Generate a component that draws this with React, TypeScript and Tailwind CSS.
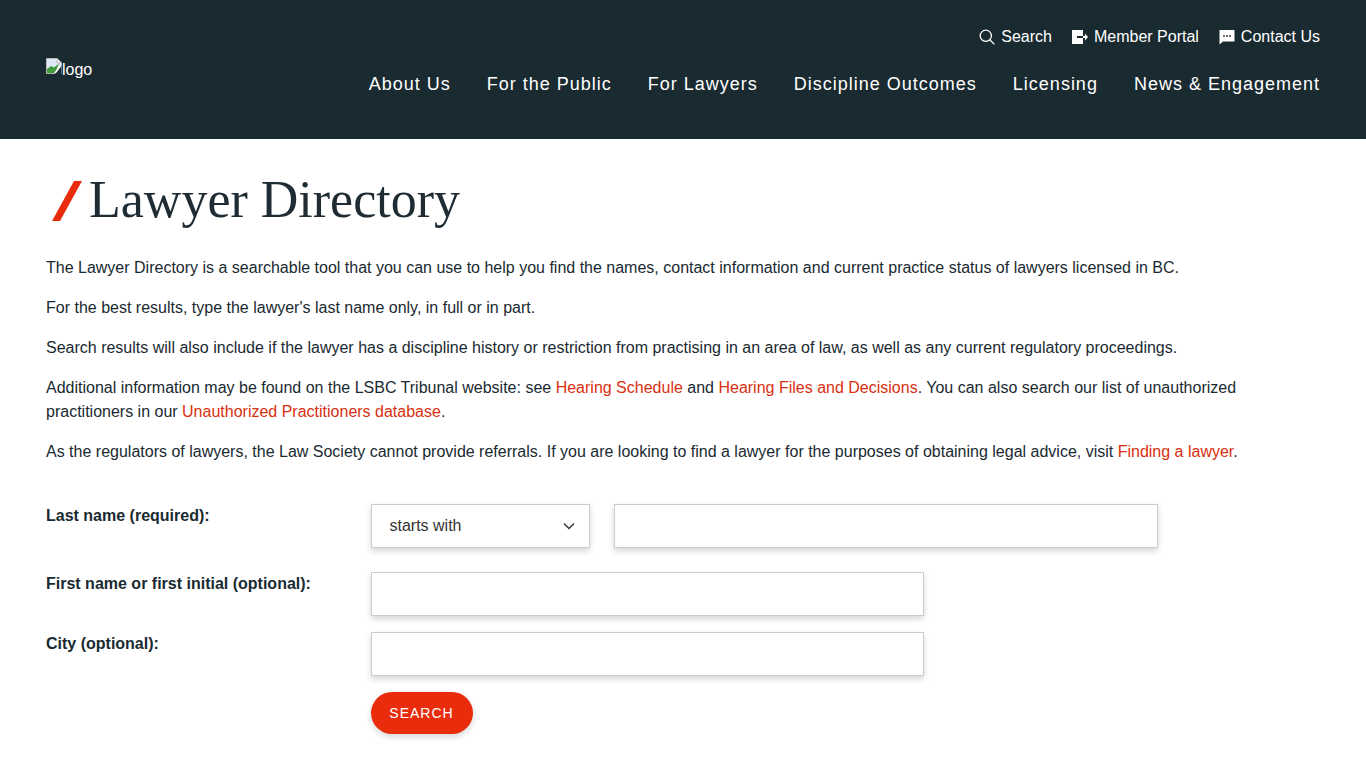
import React from "react";

const navItems = ["About Us", "For the Public", "For Lawyers", "Discipline Outcomes", "Licensing", "News & Engagement"];

const BrokenImage = () => (
  <svg width="16" height="16" viewBox="0 0 16 16" className="shrink-0 -mt-px">
    <path d="M0.5 0.5H11L15.5 5V15.5H0.5Z" fill="#dfe8f6" stroke="#b8b8b8" />
    <path d="M11 0.5V5H15.5" fill="#fff" stroke="#b8b8b8" />
    <path d="M1 15V11L5 8L8 9.5L13 5.5L9 15Z" fill="#3f9a3a" />
    <path d="M9 16L15.5 7.5V16Z" fill="#1a2a31" />
    <path d="M8 15L14 7.5L15 8.5L10 15Z" fill="#fff" />
  </svg>
);

const Header = () => (
  <header className="h-[139px] bg-[#1a2a31] px-[46px] flex justify-between text-white">
    <div className="flex items-start pt-[59px] text-base leading-[22px]">
      <BrokenImage />
      <span>logo</span>
    </div>
    <div className="flex flex-col items-end pt-[26px]">
      <div className="flex items-center gap-5 text-base leading-[22px]">
        <a className="flex items-center gap-[6px]">
          <svg width="16" height="16" viewBox="0 0 16 16" fill="none" stroke="#fff" strokeWidth="1.3">
            <circle cx="6.8" cy="6.8" r="5.6" />
            <path d="M10.8 10.8L15.4 15.4" />
          </svg>
          Search
        </a>
        <a className="flex items-center gap-[6px]">
          <svg width="16" height="16" viewBox="0 0 16 16">
            <path d="M0 1H11V15H0Z" fill="#fff" />
            <path d="M5 7H11V9H5Z" fill="#1a2a31" />
            <path d="M11 7H13V4.5L16 8L13 11.5V9H11Z" fill="#fff" />
          </svg>
          Member Portal
        </a>
        <a className="flex items-center gap-[6px]">
          <svg width="16" height="16" viewBox="0 0 16 16">
            <path d="M1 1H15.5V12.5H4L0.5 15.5V1Z" fill="#fff" />
            <circle cx="5" cy="7" r="0.9" fill="#1a2a31" />
            <circle cx="8" cy="7" r="0.9" fill="#1a2a31" />
            <circle cx="11" cy="7" r="0.9" fill="#1a2a31" />
          </svg>
          Contact Us
        </a>
      </div>
      <nav className="flex gap-9 mt-[24px] text-lg leading-[24px] tracking-[1px]">
        {navItems.map((item) => (
          <a key={item}>{item}</a>
        ))}
      </nav>
    </div>
  </header>
);

const inputClass = "h-[44px] bg-white border border-[#cccccc] shadow-[0_3px_6px_rgba(0,0,0,0.16)]";

const App = () => {
  return (
    <div className="min-h-[768px] bg-white font-['Liberation_Sans',Arial,sans-serif] text-[#1a2a31] text-base overflow-hidden">
      <Header />
      <main className="pl-[46px] pr-[46px]">
        <h1 className="flex items-center h-[117px] font-['Liberation_Serif',serif] text-[52px] leading-[60px] text-[#1f2c33]">
          <svg width="30" height="40" viewBox="0 0 30 40" className="ml-[6px] mr-[7px] mt-[7px] shrink-0">
            <polygon points="22,0 30,0 8,40 0,40" fill="#e82c0c" />
          </svg>
          <span className="mt-[4px]">Lawyer Directory</span>
        </h1>
        <div className="leading-6 flex flex-col gap-4 max-w-[1210px]">
          <p>The Lawyer Directory is a searchable tool that you can use to help you find the names, contact information and current practice status of lawyers licensed in BC.</p>
          <p>For the best results, type the lawyer's last name only, in full or in part.</p>
          <p>Search results will also include if the lawyer has a discipline history or restriction from practising in an area of law, as well as any current regulatory proceedings.</p>
          <p>
            Additional information may be found on the LSBC Tribunal website: see <a className="text-[#d9300f]">Hearing Schedule</a> and <a className="text-[#d9300f]">Hearing Files and Decisions</a>. You can also search our list of unauthorized practitioners in our <a className="text-[#d9300f]">Unauthorized Practitioners database</a>.
          </p>
          <p>
            As the regulators of lawyers, the Law Society cannot provide referrals. If you are looking to find a lawyer for the purposes of obtaining legal advice, visit <a className="text-[#d9300f]">Finding a lawyer</a>.
          </p>
        </div>
        <form className="mt-10">
          <div className="flex">
            <label className="w-[325px] font-bold leading-6">Last name (required):</label>
            <div className={`${inputClass} w-[219px] flex items-center justify-between pl-[17.5px] pr-[14px] text-[#333333]`}>
              starts with
              <svg width="12" height="8" viewBox="0 0 12 8" fill="none" stroke="#333" strokeWidth="1.4">
                <path d="M1 1.5L6 6.5L11 1.5" />
              </svg>
            </div>
            <input className={`${inputClass} w-[544px] ml-6`} />
          </div>
          <div className="flex mt-6">
            <label className="w-[325px] font-bold leading-6">First name or first initial (optional):</label>
            <input className={`${inputClass} w-[553px]`} />
          </div>
          <div className="flex mt-4">
            <label className="w-[325px] font-bold leading-6">City (optional):</label>
            <input className={`${inputClass} w-[553px]`} />
          </div>
          <button type="button" className="block ml-[325px] mt-4 w-[102px] h-[42px] pr-[1px] rounded-full bg-[#e82c0c] text-white text-sm tracking-[1px] shadow-[0_3px_6px_rgba(0,0,0,0.16)]">
            SEARCH
          </button>
        </form>
      </main>
    </div>
  );
};

export default App;
